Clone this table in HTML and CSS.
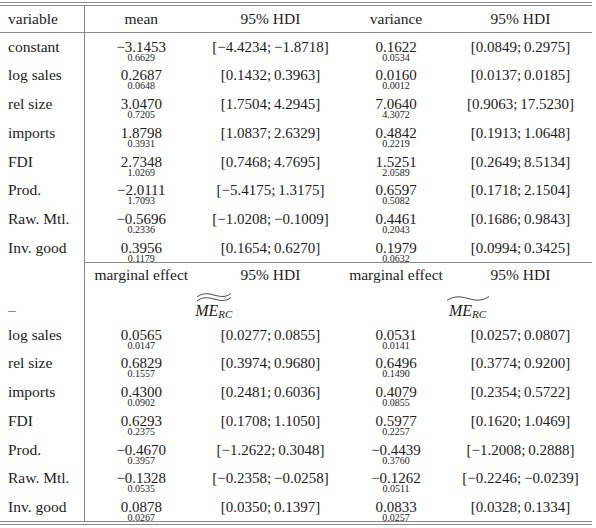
FILE: index.html
```html
<!DOCTYPE html>
<html lang="en">
<head>
    <meta charset="UTF-8">
    <title>Posterior estimates</title>
    <link rel="stylesheet" href="styles.css">
</head>
<body>
    <div class="frame">
        <table class="est">
            <colgroup>
                <col class="c1"><col class="c2"><col class="c3"><col class="c4"><col class="c5">
            </colgroup>
            <tr class="head">
                <td class="var">variable</td><td>mean</td><td>95% HDI</td><td>variance</td><td>95% HDI</td>
            </tr>
            <tr>
                <td class="var">constant</td>
                <td><span class="m">&minus;3.1453</span><span class="s">0.6629</span></td>
                <td><span class="m">[&minus;4.4234;&thinsp;&minus;1.8718]</span></td>
                <td><span class="m">0.1622</span><span class="s">0.0534</span></td>
                <td><span class="m">[0.0849;&thinsp;0.2975]</span></td>
            </tr>
            <tr>
                <td class="var">log sales</td>
                <td><span class="m">0.2687</span><span class="s">0.0648</span></td>
                <td><span class="m">[0.1432;&thinsp;0.3963]</span></td>
                <td><span class="m">0.0160</span><span class="s">0.0012</span></td>
                <td><span class="m">[0.0137;&thinsp;0.0185]</span></td>
            </tr>
            <tr>
                <td class="var">rel size</td>
                <td><span class="m">3.0470</span><span class="s">0.7205</span></td>
                <td><span class="m">[1.7504;&thinsp;4.2945]</span></td>
                <td><span class="m">7.0640</span><span class="s">4.3072</span></td>
                <td><span class="m">[0.9063;&thinsp;17.5230]</span></td>
            </tr>
            <tr>
                <td class="var">imports</td>
                <td><span class="m">1.8798</span><span class="s">0.3931</span></td>
                <td><span class="m">[1.0837;&thinsp;2.6329]</span></td>
                <td><span class="m">0.4842</span><span class="s">0.2219</span></td>
                <td><span class="m">[0.1913;&thinsp;1.0648]</span></td>
            </tr>
            <tr>
                <td class="var">FDI</td>
                <td><span class="m">2.7348</span><span class="s">1.0269</span></td>
                <td><span class="m">[0.7468;&thinsp;4.7695]</span></td>
                <td><span class="m">1.5251</span><span class="s">2.0589</span></td>
                <td><span class="m">[0.2649;&thinsp;8.5134]</span></td>
            </tr>
            <tr>
                <td class="var">Prod.</td>
                <td><span class="m">&minus;2.0111</span><span class="s">1.7093</span></td>
                <td><span class="m">[&minus;5.4175;&thinsp;1.3175]</span></td>
                <td><span class="m">0.6597</span><span class="s">0.5082</span></td>
                <td><span class="m">[0.1718;&thinsp;2.1504]</span></td>
            </tr>
            <tr>
                <td class="var">Raw. Mtl.</td>
                <td><span class="m">&minus;0.5696</span><span class="s">0.2336</span></td>
                <td><span class="m">[&minus;1.0208;&thinsp;&minus;0.1009]</span></td>
                <td><span class="m">0.4461</span><span class="s">0.2043</span></td>
                <td><span class="m">[0.1686;&thinsp;0.9843]</span></td>
            </tr>
            <tr>
                <td class="var">Inv. good</td>
                <td><span class="m">0.3956</span><span class="s">0.1179</span></td>
                <td><span class="m">[0.1654;&thinsp;0.6270]</span></td>
                <td><span class="m">0.1979</span><span class="s">0.0632</span></td>
                <td><span class="m">[0.0994;&thinsp;0.3425]</span></td>
            </tr>

            <tr class="sub-head">
                <td class="var"></td><td>marginal effect</td><td>95% HDI</td><td>marginal effect</td><td>95% HDI</td>
            </tr>
            <tr class="me-row">
                <td class="var">&ndash;</td>
                <td colspan="2">
                    <span class="me">
                        <svg class="tilde" width="36" height="10" viewBox="0 0 36 10">
                            <path d="M1 5 C7 0.5 12 1.5 18 3 S29 6 35 1.5"/>
                            <path d="M1 9 C7 4.5 12 5.5 18 7 S29 10 35 5.5"/>
                        </svg>
                        <span class="me-txt"><i>ME</i><sub>RC</sub></span>
                    </span>
                </td>
                <td colspan="2">
                    <span class="me">
                        <svg class="tilde" width="44" height="7" viewBox="0 0 44 7">
                            <path d="M1 5.5 C8 0.5 15 1.5 22 3.5 S36 6.5 43 1.5"/>
                        </svg>
                        <span class="me-txt"><i>ME</i><sub>RC</sub></span>
                    </span>
                </td>
            </tr>
            <tr>
                <td class="var">log sales</td>
                <td><span class="m">0.0565</span><span class="s">0.0147</span></td>
                <td><span class="m">[0.0277;&thinsp;0.0855]</span></td>
                <td><span class="m">0.0531</span><span class="s">0.0141</span></td>
                <td><span class="m">[0.0257;&thinsp;0.0807]</span></td>
            </tr>
            <tr>
                <td class="var">rel size</td>
                <td><span class="m">0.6829</span><span class="s">0.1557</span></td>
                <td><span class="m">[0.3974;&thinsp;0.9680]</span></td>
                <td><span class="m">0.6496</span><span class="s">0.1490</span></td>
                <td><span class="m">[0.3774;&thinsp;0.9200]</span></td>
            </tr>
            <tr>
                <td class="var">imports</td>
                <td><span class="m">0.4300</span><span class="s">0.0902</span></td>
                <td><span class="m">[0.2481;&thinsp;0.6036]</span></td>
                <td><span class="m">0.4079</span><span class="s">0.0855</span></td>
                <td><span class="m">[0.2354;&thinsp;0.5722]</span></td>
            </tr>
            <tr>
                <td class="var">FDI</td>
                <td><span class="m">0.6293</span><span class="s">0.2375</span></td>
                <td><span class="m">[0.1708;&thinsp;1.1050]</span></td>
                <td><span class="m">0.5977</span><span class="s">0.2257</span></td>
                <td><span class="m">[0.1620;&thinsp;1.0469]</span></td>
            </tr>
            <tr>
                <td class="var">Prod.</td>
                <td><span class="m">&minus;0.4670</span><span class="s">0.3957</span></td>
                <td><span class="m">[&minus;1.2622;&thinsp;0.3048]</span></td>
                <td><span class="m">&minus;0.4439</span><span class="s">0.3760</span></td>
                <td><span class="m">[&minus;1.2008;&thinsp;0.2888]</span></td>
            </tr>
            <tr>
                <td class="var">Raw. Mtl.</td>
                <td><span class="m">&minus;0.1328</span><span class="s">0.0535</span></td>
                <td><span class="m">[&minus;0.2358;&thinsp;&minus;0.0258]</span></td>
                <td><span class="m">&minus;0.1262</span><span class="s">0.0511</span></td>
                <td><span class="m">[&minus;0.2246;&thinsp;&minus;0.0239]</span></td>
            </tr>
            <tr>
                <td class="var">Inv. good</td>
                <td><span class="m">0.0878</span><span class="s">0.0267</span></td>
                <td><span class="m">[0.0350;&thinsp;0.1397]</span></td>
                <td><span class="m">0.0833</span><span class="s">0.0257</span></td>
                <td><span class="m">[0.0328;&thinsp;0.1334]</span></td>
            </tr>
        </table>
    </div>
</body>
</html>
```

FILE: styles.css
```css
body{
    margin: 0;
    background: #fff;
    color: #1c1c1c;
    font-family: "Liberation Serif", "Times New Roman", serif;
}
.frame{
    width: 592px;
    margin-top: 2px;
    border-top: 1px solid #8a8a8a;
    border-bottom: 1px solid #8a8a8a;
    padding: 2px 0;
}
.est{
    width: 592px;
    table-layout: fixed;
    border-collapse: collapse;
    border-top: 1px solid #8a8a8a;
    border-bottom: 1px solid #8a8a8a;
}
.c1{ width: 84px; }
.c2{ width: 114px; }
.c3{ width: 145px; }
.c4{ width: 106px; }
.c5{ width: 143px; }

.est td{
    padding: 6px 0 0 0;
    text-align: center;
    vertical-align: top;
    font-size: 15px;
    line-height: 16px;
    white-space: nowrap;
}
.est tr{
    height: 28.75px;
}
.est td.var{
    text-align: left;
    padding-left: 8px;
    font-size: 15.5px;
    border-right: 1px solid #8a8a8a;
}

/* header rows */
.est tr.head{
    height: 27px;
}
.est tr.head td{
    padding-top: 5px;
    font-size: 15.5px;
    border-bottom: 1px solid #8a8a8a;
}
.est tr.sub-head{
    height: 26px;
}
.est tr.sub-head td{
    padding-top: 4px;
    font-size: 15.5px;
}
.est tr.sub-head td:not(.var){
    border-top: 1px solid #8a8a8a;
}
.est tr.me-row{
    height: 26px;
}
.est tr.me-row td{
    padding-top: 0;
    vertical-align: bottom;
    padding-bottom: 3px;
}

/* value + standard deviation below */
.m{
    display: block;
}
.s{
    display: block;
    font-size: 10px;
    line-height: 6px;
}

/* tilde accent over ME_RC */
.me{
    display: inline-flex;
    flex-direction: column;
    align-items: center;
}
.tilde{
    display: block;
    margin-bottom: 1px;
}
.tilde path{
    fill: none;
    stroke: #333;
    stroke-width: 0.9;
}
.me-txt{
    font-size: 16px;
    line-height: 15px;
}
.me-txt sub{
    font-style: italic;
    font-size: 11px;
    vertical-align: -2px;
    line-height: 0;
}
```
